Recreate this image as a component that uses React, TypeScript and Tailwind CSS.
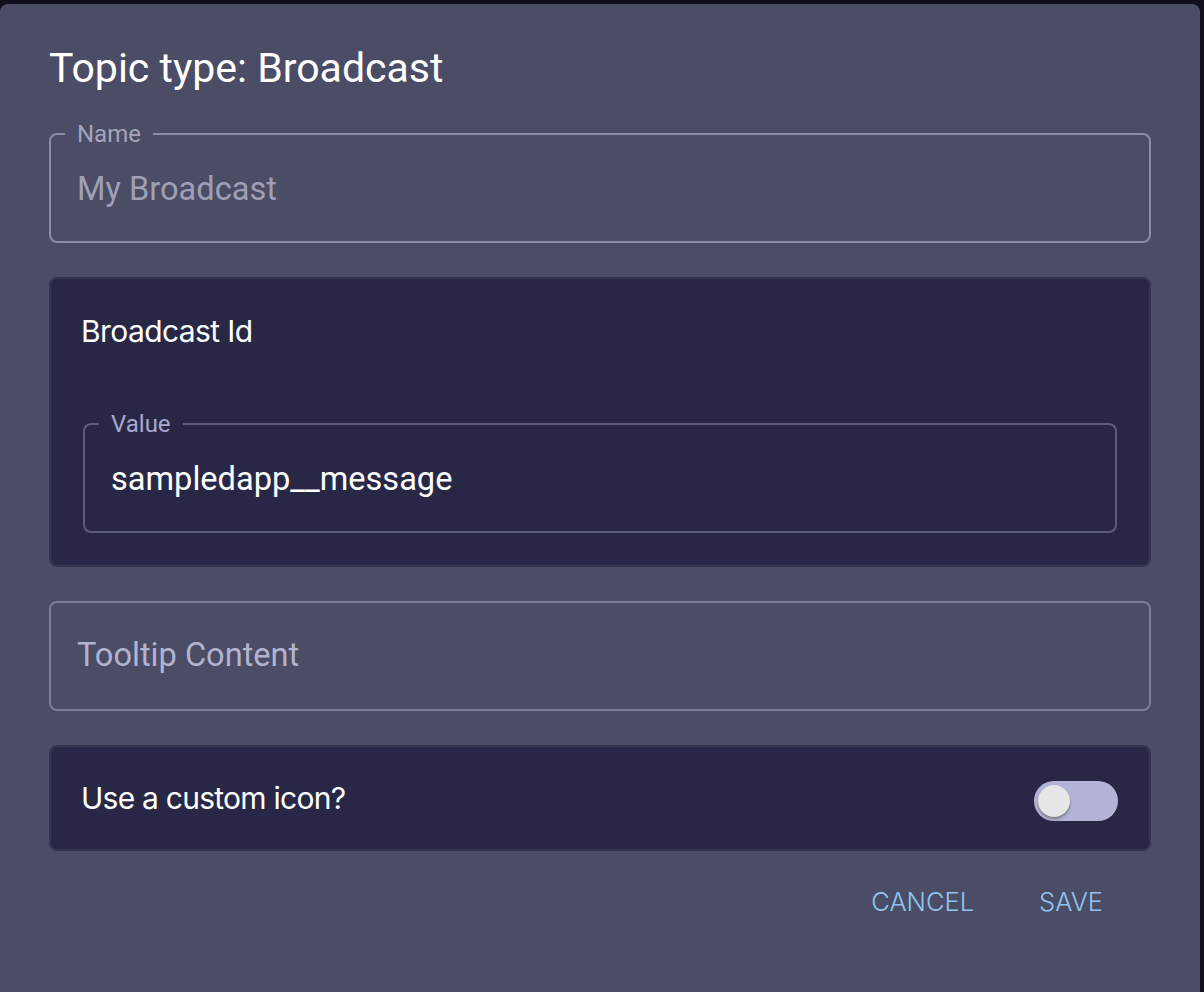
import React, { useState } from "react";

const roboto = "font-['Roboto','Liberation_Sans',sans-serif]";
const geo = "font-['Inter','Lato',sans-serif]";

const OutlinedField = (props: {
    label: string;
    value: string;
    borderClass: string;
    labelClass: string;
    textClass: string;
}) => (
    <fieldset
        className={`h-[121px] rounded-[8px] border-2 ${props.borderClass} px-[26px]`}
    >
        <legend
            className={`ml-[-12px] px-[12px] text-[24px] leading-none ${props.labelClass}`}
        >
            {props.label}
        </legend>
        <div
            className={`pt-[27px] text-[32.6px] leading-none ${props.textClass}`}
        >
            {props.value}
        </div>
    </fieldset>
);

export default function App() {
    const [customIcon, setCustomIcon] = useState(false);

    return (
        <div
            className={`h-[992px] w-[1204px] overflow-hidden bg-[#10101c] pt-[4px] pr-[4px] ${roboto}`}
        >
            <div className="flex h-full flex-col rounded-t-[8px] bg-[#4b4c66] px-[49px]">
                <h2 className="mt-[40px] text-[41px] leading-[48px] text-white">
                    Topic type: Broadcast
                </h2>

                <div className="mt-[30px]">
                    <OutlinedField
                        label="Name"
                        value="My Broadcast"
                        borderClass="border-[#8b8ca6]"
                        labelClass="text-[#a4a5ba]"
                        textClass="text-[#9fa0b6]"
                    />
                </div>

                <section className="mt-[34px] rounded-[8px] border-2 border-[#34354f] bg-[#282846] px-[32px] pt-[37px] pb-[32px]">
                    <h3
                        className={`-ml-[2px] text-[30px] leading-none tracking-[-0.02em] text-white ${geo}`}
                    >
                        Broadcast Id
                    </h3>
                    <div className="mt-[66px]">
                        <OutlinedField
                            label="Value"
                            value="sampledapp__message"
                            borderClass="border-[#5c5d7b]"
                            labelClass="text-[#a7a8cb]"
                            textClass="text-white"
                        />
                    </div>
                </section>

                <div className="mt-[34px] h-[110px] rounded-[8px] border-2 border-[#7c7d98] pt-[36px] pl-[26px]">
                    <span className="text-[32.6px] leading-none text-[#b2b3cf]">
                        Tooltip Content
                    </span>
                </div>

                <section className="mt-[34px] flex h-[106px] items-center justify-between rounded-[8px] border-2 border-[#34354f] bg-[#282846] pr-[31px] pl-[30px]">
                    <span
                        className={`text-[30px] leading-none tracking-[-0.025em] text-white ${geo}`}
                    >
                        Use a custom icon?
                    </span>
                    <button
                        onClick={() => setCustomIcon(!customIcon)}
                        className="mt-[6px] flex h-[40px] w-[84px] items-center rounded-full bg-[#b4b4d6] px-[4px]"
                    >
                        <span
                            className={`h-[32px] w-[32px] rounded-full bg-[#e6e6e6] shadow-[0_2px_3px_rgba(0,0,0,0.35)] ${
                                customIcon ? "ml-auto" : ""
                            }`}
                        />
                    </button>
                </section>

                <div className="mt-[15px] flex h-[72px] items-center justify-end gap-[65px] pr-[48px]">
                    <button
                        className={`text-[25.5px] leading-none font-light text-[#90c4f2] ${geo}`}
                    >
                        CANCEL
                    </button>
                    <button
                        className={`text-[25.5px] leading-none font-light text-[#90c4f2] ${geo}`}
                    >
                        SAVE
                    </button>
                </div>
            </div>
        </div>
    );
}
